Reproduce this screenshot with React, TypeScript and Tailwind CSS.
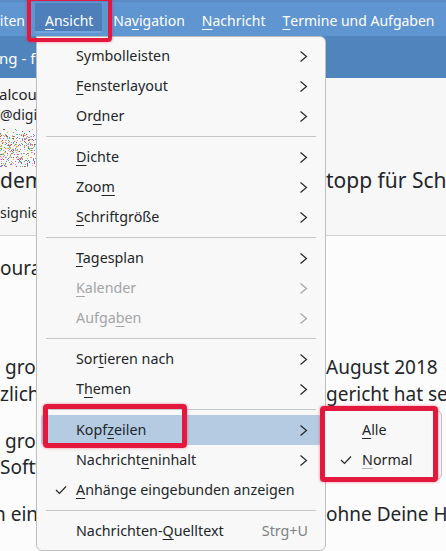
import React from 'react';

type Entry =
  | 'sep'
  | { label: string; u?: number; sub?: boolean; disabled?: boolean; checked?: boolean; active?: boolean; shortcut?: string };

const entries: Entry[] = [
  { label: 'Symbolleisten', sub: true },
  { label: 'Fensterlayout', u: 0, sub: true },
  { label: 'Ordner', u: 2, sub: true },
  'sep',
  { label: 'Dichte', u: 0, sub: true },
  { label: 'Zoom', u: 3, sub: true },
  { label: 'Schriftgröße', u: 0, sub: true },
  'sep',
  { label: 'Tagesplan', u: 0, sub: true },
  { label: 'Kalender', u: 0, sub: true, disabled: true },
  { label: 'Aufgaben', u: 5, sub: true, disabled: true },
  'sep',
  { label: 'Sortieren nach', u: 3, sub: true },
  { label: 'Themen', u: 1, sub: true },
  'sep',
  { label: 'Kopfzeilen', u: 4, sub: true, active: true },
  { label: 'Nachrichteninhalt', u: 9, sub: true },
  { label: 'Anhänge eingebunden anzeigen', u: 0, checked: true },
  'sep',
  { label: 'Nachrichten-Quelltext', u: 12, shortcut: 'Strg+U' },
];

function U({ text, u, dim }: { text: string; u?: number; dim?: boolean }) {
  if (u === undefined) return <>{text}</>;
  return (
    <>
      {text.slice(0, u)}
      <span className={`underline decoration-1 underline-offset-[3px] ${dim ? 'decoration-[#b4b7ba]' : ''}`}>{text[u]}</span>
      {text.slice(u + 1)}
    </>
  );
}

function Chevron({ color }: { color: string }) {
  return (
    <svg width="9" height="13" viewBox="0 0 9 13" fill="none">
      <polyline points="1.5,1.5 7.5,6.5 1.5,11.5" stroke={color} strokeWidth="1.2" />
    </svg>
  );
}

function Check() {
  return (
    <svg width="12" height="10" viewBox="0 0 12 10" fill="none">
      <polyline points="1,5 4.5,8.5 11,1.5" stroke="#232629" strokeWidth="1.2" />
    </svg>
  );
}

// broken avatar image: sparse coloured pixels
function Noise() {
  let s = 12345;
  const rnd = () => {
    s = (s * 16807) % 2147483647;
    return s / 2147483647;
  };
  const colors = ['#e23a55', '#5b7fe6', '#3fb45e', '#c65fcb', '#e2b62f', '#48c2c9', '#9a9a9a', '#6a6a6a', '#f08a3a', '#e7a1c8'];
  const px: React.ReactNode[] = [];
  for (let y = 0; y < 38; y++) {
    for (let x = 0; x < 36; x++) {
      const d = y < 5 ? 0.06 : 0.24;
      if (rnd() < d) {
        px.push(<rect key={`${x}-${y}`} x={x} y={y} width="1" height="1" fill={colors[Math.floor(rnd() * colors.length)]} />);
      }
    }
  }
  return (
    <svg width="36" height="38" viewBox="0 0 36 38" shapeRendering="crispEdges">
      {px}
    </svg>
  );
}

function Row({ left, right, cls = '' }: { left: React.ReactNode; right?: React.ReactNode; cls?: string }) {
  return (
    <div className={`flex whitespace-nowrap ${cls}`}>
      <span className="w-[326px] shrink-0 overflow-hidden">{left}</span>
      <span className="shrink-0">{right}</span>
    </div>
  );
}

export default function App() {
  return (
    <div className="relative h-[551px] w-[446px] overflow-hidden bg-[#fcfcfc] font-['Noto_Sans',sans-serif] text-[#232629]">
      {/* menu bar */}
      <div className="flex h-[36px] items-start whitespace-nowrap border-t-2 border-[#5a8bc5] bg-[#5f95d1] text-[14px] text-white">
        <span className="mt-[1px] flex h-[30px] w-[35px] shrink-0 items-center justify-end overflow-hidden pb-[2px] pr-[10px] pt-[6px]">eiten</span>
        <span className="mt-[1px] flex h-[30px] items-center border-b-2 border-[#6ea3dc] bg-[#4e7fba] pl-[10px] pr-[9px] pt-[6px]">
          <U text="Ansicht" u={0} />
        </span>
        <span className="mt-[1px] flex h-[30px] items-center pb-[2px] pl-[11px] pr-[9px] pt-[6px]">
          <U text="Navigation" u={2} />
        </span>
        <span className="mt-[1px] flex h-[30px] items-center pb-[2px] px-[8px] pt-[6px]">
          <U text="Nachricht" u={0} />
        </span>
        <span className="mt-[1px] flex h-[30px] items-center pb-[2px] px-[9px] pt-[6px]">
          <U text="Termine und Aufgaben" u={0} />
        </span>
      </div>

      {/* tab bar */}
      <div className="flex h-[42px] items-center whitespace-nowrap bg-[#5084bd] pt-[3px] text-[15px] text-white">
        <span className="-ml-[1px]">ng - freigegebene Nachricht</span>
      </div>

      {/* message header */}
      <div className="flex h-[158px] flex-col border-b border-[#d1d2d3] bg-[#f7f7f7] pt-[6px]">
        <Row left={<span className="-ml-[1px]">alcount</span>} cls="text-[15px] leading-[20px]" />
        <Row left="@digitalcourage.de" cls="mt-[1px] text-[14px] leading-[20px]" />
        <div className="mt-[4px]">
          <Noise />
        </div>
        <Row left="dem Stopp" right="topp für Schriftverkehr" cls="-mt-[1px] text-[21px] leading-[28px]" />
        <Row left="signiert" cls="mt-[9px] text-[14px] leading-[20px]" />
      </div>

      {/* body */}
      <div className="flex flex-col text-[19px] leading-[27px]">
        <Row left="oura," cls="mt-[19px]" />
        <Row left={<span className="pl-[5px]">große Aufregung</span>} right="August 2018" cls="mt-[72px]" />
        <Row left="zlich vom Landgericht" right="gericht hat sein" />
        <Row left={<span className="pl-[5px]">große Mehrheit</span>} right="t" cls="mt-[20px]" />
        <Row left="Software zu" cls="-mt-[1px]" />
        <Row left={<span className="-ml-[6px]">n eine Mail</span>} right="ohne Deine Hilfe" cls="mt-[20px]" />
      </div>

      {/* Ansicht menu */}
      <div className="absolute left-[36px] top-[36px] z-10 h-[515px] w-[290px] rounded-b-[6px] rounded-tr-[6px] border border-[#bdbebf] bg-[#f8f8f8] px-[4px] py-[4px] text-[14.3px] text-[#232629]">
        {entries.map((e, i) =>
          e === 'sep' ? (
            <div key={i} className="flex h-[11px] items-center px-[5px]">
              <div className="h-px w-full bg-[#c6c7c8]" />
            </div>
          ) : (
            <div
              key={i}
              className={`flex h-[30px] items-center whitespace-nowrap rounded-[3px] pl-[14px] pr-[13px] ${e.active ? 'bg-[#b4cbe2]' : ''} ${e.disabled ? 'text-[#a3a5a7]' : ''}`}
            >
              <span className="flex w-[21px] shrink-0 items-center">{e.checked && <Check />}</span>
              <span className="flex-1">
                <U text={e.label} u={e.u} />
              </span>
              {e.shortcut && <span className="text-[#7f8184]">{e.shortcut}</span>}
              {e.sub && <Chevron color={e.disabled ? '#a3a5a7' : '#232629'} />}
            </div>
          ),
        )}
      </div>

      {/* Kopfzeilen submenu */}
      <div className="absolute left-[321px] top-[410px] z-20 h-[70px] w-[121px] rounded-[6px] border border-[#bdbebf] bg-[#f8f8f8] p-[4px] text-[14.3px]">
        <div className="flex h-[30px] items-center pl-[14px]">
          <span className="w-[22px] shrink-0" />
          <U text="Alle" u={0} />
        </div>
        <div className="flex h-[30px] items-center pl-[14px]">
          <span className="flex w-[22px] shrink-0 items-center">
            <Check />
          </span>
          <U text="Normal" u={0} dim />
        </div>
      </div>

      {/* red annotation boxes */}
      <div className="absolute left-[27px] top-[-3px] z-30 h-[45px] w-[85px] rounded-[4px] border-[4px] border-[#e3183c] shadow-[0_0_3px_rgba(227,24,60,0.5)]" />
      <div className="absolute left-[43px] top-[404px] z-30 h-[44px] w-[144px] rounded-[4px] border-[5px] border-[#e3183c] shadow-[0_0_3px_rgba(227,24,60,0.5)]" />
      <div className="absolute left-[320px] top-[406px] z-30 h-[76px] w-[118px] rounded-[4px] border-[5px] border-[#e3183c] shadow-[0_0_3px_rgba(227,24,60,0.5)]" />
    </div>
  );
}
